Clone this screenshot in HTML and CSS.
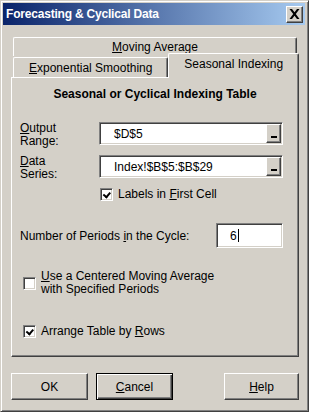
FILE: index.html
```html
<!DOCTYPE html>
<html lang="en">
<head>
    <meta charset="UTF-8">
    <title>Forecasting &amp; Cyclical Data</title>
    <link rel="stylesheet" href="styles.css">
</head>
<body>
    <div class="window">
        <!-- Title bar -->
        <div class="titlebar">
            <span class="title">Forecasting &amp; Cyclical Data</span>
            <button class="close">
                <svg width="11" height="10" viewBox="0 0 11 10">
                    <path d="M0.5 0h2.5l2.5 3.3L8 0h2.5L6.8 5 10.5 10H8L5.5 6.7 3 10H0.5l3.7-5z" fill="#000"/>
                </svg>
            </button>
        </div>

        <div class="content">
            <!-- Tabs -->
            <div class="tabs">
                <div class="tab-row">
                    <div class="tab full"><u>M</u>oving Average</div>
                </div>
                <div class="tab-row">
                    <div class="tab expo"><u>E</u>xponential Smoothing</div>
                    <div class="tab active">Seasonal Indexing</div>
                </div>
            </div>

            <!-- Tab page -->
            <div class="panel">
                <h1>Seasonal or Cyclical Indexing Table</h1>

                <div class="field first">
                    <label><u>O</u>utput<br>Range:</label>
                    <div class="refedit">
                        <span>$D$5</span>
                        <button class="pick"><i></i></button>
                    </div>
                </div>
                <div class="field">
                    <label><u>D</u>ata<br>Series:</label>
                    <div class="refedit">
                        <span>Index!$B$5:$B$29</span>
                        <button class="pick"><i></i></button>
                    </div>
                </div>

                <div class="check labels">
                    <span class="box checked"></span>
                    <span>Labels in <u>F</u>irst Cell</span>
                </div>

                <div class="periods">
                    <span>Number of Periods <u>i</u>n the Cycle:</span>
                    <div class="numbox">6<span class="caret"></span></div>
                </div>

                <div class="check centered">
                    <span class="box"></span>
                    <span><u>U</u>se a Centered Moving Average<br>with Specified Periods</span>
                </div>

                <div class="check rows">
                    <span class="box checked"></span>
                    <span>Arrange Table by <u>R</u>ows</span>
                </div>
            </div>

            <!-- Dialog buttons -->
            <div class="buttons">
                <button class="btn">OK</button>
                <button class="btn default"><u>C</u>ancel</button>
                <button class="btn help"><u>H</u>elp</button>
            </div>
        </div>
    </div>
</body>
</html>
```

FILE: styles.css
```css
/* General */
* {
    box-sizing: border-box;
    margin: 0;
    padding: 0;
}
body {
    width: 309px;
    height: 412px;
    background-color: #d4d0c8;
    font-family: "Liberation Sans", Arial, sans-serif;
    font-size: 12px;
    color: #000;
}
button {
    font: inherit;
    color: inherit;
    background-color: #d4d0c8;
}

/* Window frame */
.window {
    width: 309px;
    height: 412px;
    padding: 3px;
    border: 1px solid;
    border-color: #d4d0c8 #404040 #404040 #d4d0c8;
    box-shadow: inset 1px 1px 0 #fff, inset -1px -1px 0 #808080;
}
.titlebar {
    height: 22px;
    margin: -1px 0 0 -1px;
    padding: 0 2px 0 3px;
    display: flex;
    align-items: center;
    justify-content: space-between;
    background: linear-gradient(to right, #0a246a, #a6caf0);
}
.title {
    color: #fff;
    font-weight: bold;
    font-size: 12px;
    letter-spacing: -0.2px;
}
.close {
    width: 17px;
    height: 17px;
    display: flex;
    align-items: center;
    justify-content: center;
    border: 1px solid;
    border-color: #fff #404040 #404040 #fff;
    box-shadow: inset -1px -1px 0 #808080;
}

/* Body */
.content {
    padding: 12px 6px 0 7px;
}

/* Tabs */
.tabs {
    height: 40px;
}
.tab-row {
    display: flex;
    height: 20px;
}
.tab {
    position: relative;
    height: 20px;
    display: flex;
    align-items: center;
    justify-content: center;
    border: 1px solid;
    border-bottom: none;
    border-color: #fff #404040 #404040 #fff;
    border-radius: 2px 2px 0 0;
    box-shadow: inset -1px 0 0 #808080;
    background-color: #d4d0c8;
}
.tab.full {
    width: 284px;
    margin-left: 2px;
    height: 19px;
}
.tab.expo {
    width: 156px;
    margin-left: 2px;
}
.tab.active {
    width: 131px;
    height: 25px;
    margin-top: -4px;
    z-index: 2;
    padding-bottom: 4px;
}

/* Tab page */
.panel {
    height: 280px;
    padding: 0 8px;
    border: 1px solid;
    border-color: #fff #404040 #404040 #fff;
    box-shadow: inset -1px -1px 0 #808080;
}
h1 {
    margin-top: 8px;
    font-size: 12px;
    line-height: 16px;
    text-align: center;
}

/* Reference fields */
.field {
    display: flex;
    height: 26px;
    margin-top: 7px;
}
.field.first {
    margin-top: 20px;
}
.field label {
    width: 79px;
    line-height: 13px;
}
.refedit {
    width: 184px;
    height: 23px;
    display: flex;
    align-items: center;
    justify-content: space-between;
    padding: 0 1px 0 14px;
    background-color: #fff;
    border: 1px solid;
    border-color: #808080 #fff #fff #808080;
    box-shadow: inset 1px 1px 0 #404040, inset -1px -1px 0 #d4d0c8;
}
.pick {
    width: 15px;
    height: 19px;
    display: flex;
    align-items: flex-end;
    justify-content: center;
    padding-bottom: 4px;
    border: 1px solid;
    border-color: #fff #404040 #404040 #fff;
    box-shadow: inset -1px -1px 0 #808080;
}
.pick i {
    width: 6px;
    height: 2px;
    background-color: #000;
}

/* Checkboxes */
.check {
    display: flex;
    align-items: center;
    gap: 5px;
    line-height: 13px;
}
.box {
    width: 13px;
    height: 13px;
    flex-shrink: 0;
    background-color: #fff;
    border: 1px solid;
    border-color: #808080 #fff #fff #808080;
    box-shadow: inset 1px 1px 0 #404040, inset -1px -1px 0 #d4d0c8;
    position: relative;
}
.box.checked::after {
    content: "";
    position: absolute;
    left: 3px;
    top: 2px;
    width: 5px;
    height: 3px;
    border-left: 2px solid #000;
    border-bottom: 2px solid #000;
    transform: rotate(-50deg) translate(-1px, 0);
}
.check.labels {
    margin: 7px 0 0 80px;
}
.check.centered {
    margin: 22px 0 0 3px;
}
.check.rows {
    margin: 29px 0 0 3px;
}

/* Periods */
.periods {
    display: flex;
    align-items: center;
    justify-content: space-between;
    margin-top: 22px;
    padding-right: 7px;
}
.numbox {
    width: 67px;
    height: 25px;
    display: flex;
    align-items: center;
    padding-left: 13px;
    background-color: #fff;
    border: 1px solid;
    border-color: #808080 #fff #fff #808080;
    box-shadow: inset 1px 1px 0 #404040, inset -1px -1px 0 #d4d0c8;
}
.caret {
    width: 1px;
    height: 13px;
    margin-left: 1px;
    background-color: #000;
}

/* Dialog buttons */
.buttons {
    display: flex;
    margin-top: 16px;
    gap: 8px;
}
.btn {
    width: 77px;
    height: 27px;
    border: 1px solid;
    border-color: #fff #404040 #404040 #fff;
    box-shadow: inset -1px -1px 0 #808080;
}
.btn.default {
    border-color: #000;
    box-shadow: inset 1px 1px 0 #fff, inset -1px -1px 0 #404040, inset -2px -2px 0 #808080;
}
.btn.help {
    width: 75px;
    margin-left: auto;
}
```
